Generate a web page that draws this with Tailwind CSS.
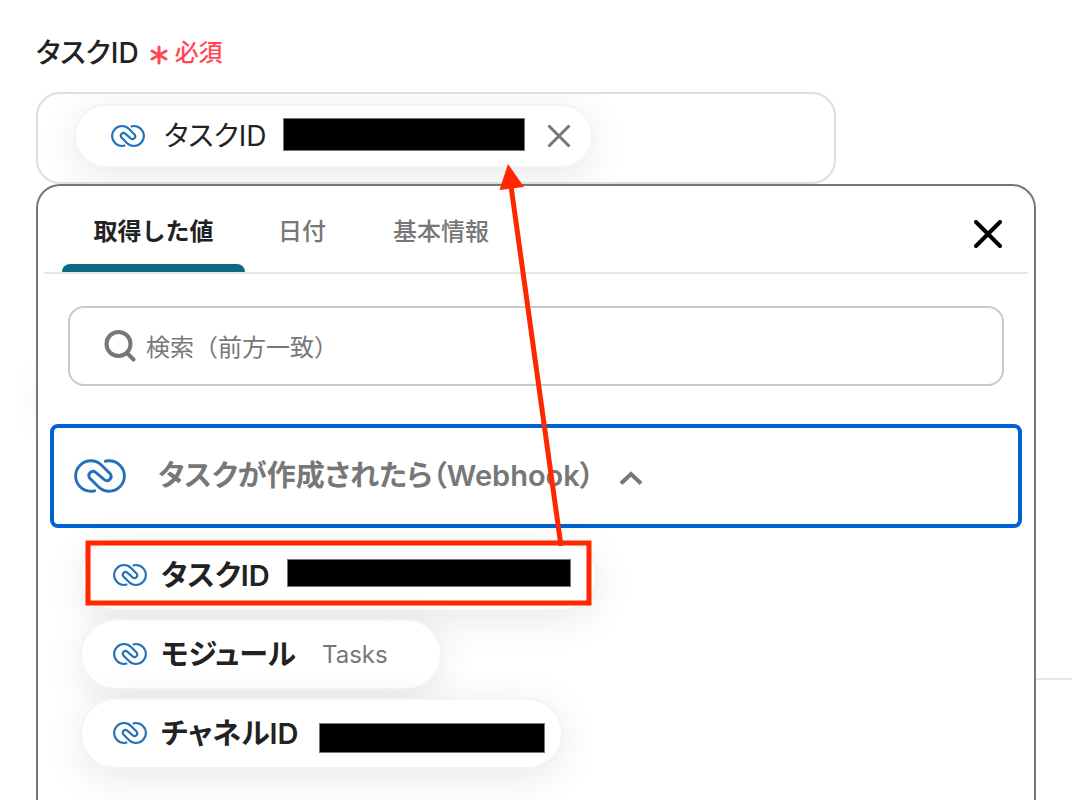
<!DOCTYPE html>
<html lang="ja">
<head>
<meta charset="utf-8">
<meta name="viewport" content="width=device-width, initial-scale=1">
<title>タスクID</title>
<script src="https://cdn.jsdelivr.net/npm/@tailwindcss/browser@4"></script>
</head>
<body class="relative flex min-h-screen flex-col overflow-x-hidden bg-white px-9 font-['Inter','Noto_Sans_CJK_JP',sans-serif] text-[#222]">

<svg class="hidden" aria-hidden="true">
  <symbol id="logo" viewBox="0 0 160 104">
    <path fill="none" stroke="currentColor" stroke-linecap="butt" d="M67 96 Q60 99 52 99 A47 47 0 0 1 52 5 Q71 5 85 19 L112 46 A13 13 0 0 1 94 64 L66 40 A13 13 0 0 0 48 58 L75 85 Q89 99 108 99 A47 47 0 0 0 108 5 Q100 5 93 8"/>
  </symbol>
</svg>

<!-- page behind the menu -->
<div class="absolute right-0 top-[678px] h-0.5 w-20 bg-[#e5e5e5]"></div>
<div class="absolute left-14 top-[380px] h-10 w-20 rounded-full shadow-[0_0_40px_8px_#0b4a3c24]"></div>

<div class="flex h-[92px] items-center gap-2.5 pt-3.5">
  <label id="field-label" class="text-[28px] leading-8 font-medium [font-feature-settings:'palt']">タスクID</label>
  <span class="flex items-center gap-1.5 text-2xl leading-8 font-medium text-[#ff4757]">
    <svg class="mt-1 size-5" viewBox="0 0 20 20" fill="none" stroke="currentColor" stroke-width="3" stroke-linecap="round" aria-hidden="true"><path d="M10 2v16M3 6l14 8M17 6L3 14"/></svg>
    必須
  </span>
</div>

<div role="group" aria-labelledby="field-label" class="flex h-[92px] w-full max-w-[800px] shrink-0 items-start overflow-hidden rounded-[24px] border-2 border-[#dbdfe4] pt-2.5 pl-9">
  <div class="flex h-[64px] items-center rounded-full border-2 border-[#f4f4f4] bg-white pr-[18px] pl-[35px] shadow-[0_8px_40px_#00000018]">
    <svg class="h-[22px] w-[34px] text-[#2271b9]" stroke-width="10" aria-hidden="true"><use href="#logo"/></svg>
    <span class="ml-[19px] text-[28px] leading-8 [font-feature-settings:'palt']">タスクID</span>
    <span class="mr-5 mb-1 ml-4 h-[33px] w-[242px] border border-[#777] bg-black"></span>
    <button type="button" aria-label="削除" class="flex size-7 items-center justify-center text-[#777]">
      <svg class="size-6" viewBox="0 0 24 24" fill="none" stroke="currentColor" stroke-width="3"><path d="M1.500 1.500l21 21M22.500 1.500l-21 21"/></svg>
    </button>
  </div>
</div>

<section class="relative flex grow flex-col rounded-t-[24px] border-2 border-b-0 border-[#777] bg-white pb-8">
  <div class="mx-1.5 flex h-[88px] items-stretch border-b-2 border-[#e5e5e5] pl-[18px]">
    <div role="tablist" class="flex grow text-2xl leading-9 font-medium text-[#777]">
      <button type="button" role="tab" aria-selected="true" class="relative w-[183px] pt-1.5 font-bold text-[#222]">取得した値<span class="absolute inset-x-0 bottom-0 h-2 rounded-t-lg bg-[#0b6a82]"></span></button>
      <button type="button" role="tab" aria-selected="false" class="w-[114px] pt-1.5">日付</button>
      <button type="button" role="tab" aria-selected="false" class="w-[164px] pt-1.5">基本情報</button>
    </div>
    <button type="button" aria-label="閉じる" class="mt-2.5 mr-6 flex w-8 items-center justify-center text-black">
      <svg class="size-7" viewBox="0 0 28 28" fill="none" stroke="currentColor" stroke-width="4" stroke-linecap="round"><path d="M2 2l24 24M26 2L2 26"/></svg>
    </button>
  </div>

  <label class="mx-[30px] mt-8 flex h-20 shrink-0 items-center gap-2.5 rounded-2xl border-2 border-[#c9c9c9] pr-6 pl-[34px]">
    <svg class="size-8 text-[#777]" viewBox="0 0 32 32" fill="none" stroke="currentColor" stroke-width="4" aria-hidden="true"><circle cx="14.500" cy="14" r="12"/><path stroke-linecap="round" d="M23 23l6.500 6.500"/></svg>
    <input type="text" aria-label="検索" placeholder="検索（前方一致）" class="min-w-0 grow pt-1 text-2xl outline-none placeholder:text-[#777]">
  </label>

  <button type="button" aria-expanded="true" class="mx-3 mt-[38px] flex h-[104px] shrink-0 items-center rounded-lg border-4 border-[#0061d1] bg-white pl-5 text-[#777]">
    <svg class="h-[34px] w-[52px] text-[#2271b9]" stroke-width="9" aria-hidden="true"><use href="#logo"/></svg>
    <span class="ml-8 text-[29px] leading-10 font-semibold [font-feature-settings:'palt']">タスクが作成されたら（Webhook）</span>
    <svg class="mt-1 ml-[25px] h-4 w-6" viewBox="0 0 24 16" fill="none" stroke="currentColor" stroke-width="4" aria-hidden="true"><path d="M2 13.500L12 4l10 9.500"/></svg>
  </button>

  <div class="mt-3 ml-[42px] flex flex-col items-start gap-2">
    <button type="button" class="flex h-[71px] w-[517px] items-center rounded-full border-2 border-[#f4f4f4] bg-white pl-[31px] shadow-[0_8px_40px_#00000018]">
      <svg class="mb-0.5 h-[22px] w-[34px] text-[#2271b9]" stroke-width="10" aria-hidden="true"><use href="#logo"/></svg>
      <span class="ml-3.5 text-[29px] leading-10 font-semibold [font-feature-settings:'palt']">タスクID</span>
      <span class="mb-1.5 ml-[17px] h-7 w-[284px] border border-[#777] bg-black"></span>
    </button>
    <button type="button" class="flex h-[71px] items-center rounded-full border-2 border-[#f4f4f4] bg-white pr-[52px] pl-[31px] shadow-[0_8px_40px_#00000018]">
      <svg class="mb-0.5 h-[22px] w-[34px] text-[#2271b9]" stroke-width="10" aria-hidden="true"><use href="#logo"/></svg>
      <span class="ml-3.5 text-[29px] leading-10 font-semibold [font-feature-settings:'palt']">モジュール</span>
      <span class="ml-[26px] text-2xl leading-10 text-[#777]">Tasks</span>
    </button>
    <button type="button" class="flex h-[71px] items-center rounded-full border-2 border-[#f4f4f4] bg-white pr-4 pl-[31px] shadow-[0_8px_40px_#00000018]">
      <svg class="mb-0.5 h-[22px] w-[34px] text-[#2271b9]" stroke-width="10" aria-hidden="true"><use href="#logo"/></svg>
      <span class="ml-3.5 text-[29px] leading-10 font-semibold [font-feature-settings:'palt']">チャネルID</span>
      <span class="mt-2 ml-5 h-[30px] w-[226px] border border-[#777] bg-black"></span>
    </button>
  </div>
</section>

<!-- annotation: outlined item and arrow to the field -->
<svg class="pointer-events-none absolute top-0 left-0 h-[620px] w-[620px]" viewBox="0 0 620 620" aria-hidden="true">
  <rect x="88" y="543" width="501" height="60" fill="none" stroke="#ff2600" stroke-width="5"/>
  <path d="M561 546L511 186" stroke="#ff2600" stroke-width="5"/>
  <path d="M508 164L524 187L499.500 190Z" fill="#ff2600"/>
</svg>
</body>
</html>
